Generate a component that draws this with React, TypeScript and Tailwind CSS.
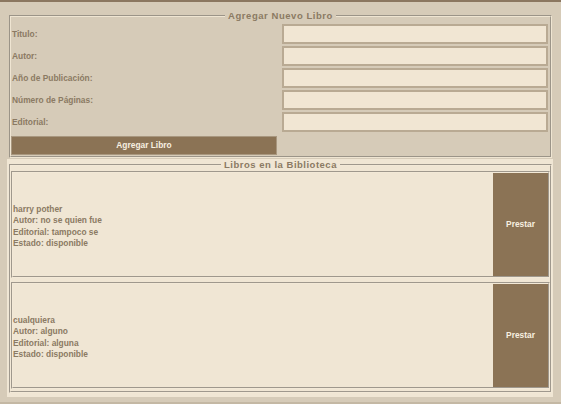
import React from "react";

const books = [
  { t: "harry pother", a: "no se quien fue", e: "tampoco se", s: "disponible" },
  { t: "cualquiera", a: "alguno", e: "alguna", s: "disponible" },
];

const fields = ["Titulo:", "Autor:", "Año de Publicación:", "Número de Páginas:", "Editorial:"];

export default function App() {
  return (
    <div
      className="w-[561px] h-[404px] bg-[#d6cbb8] border-t-2 border-b-2 border-t-[#8b7760] border-b-[#c4b8a4] text-[#8b7a63] font-bold text-[8.4px] overflow-hidden"
      style={{ fontFamily: '"Liberation Sans", Arial, sans-serif' }}
    >
      <div className="pl-[9px] pt-[7px]">
        <fieldset className="w-[543px] border-2 [border-style:groove] border-[#efe5d2] px-0 pb-[1px] m-0">
          <legend className="mx-auto px-[3px] text-[9.5px] tracking-[0.55px] leading-[14px] text-[#8b7a63]">
            Agregar Nuevo Libro
          </legend>
          <div className="grid grid-cols-[266px_266px] gap-x-[5px] gap-y-[2px] mt-[1px]">
            {fields.map((f) => (
              <React.Fragment key={f}>
                <label className="flex items-center pl-[1px] pt-[1px] h-[20px]">{f}</label>
                <input className="h-[20px] w-[266px] border-2 border-[#b9aa93] bg-[#f1e6d3] outline-none" />
              </React.Fragment>
            ))}
            <button className="col-start-1 h-[19px] mt-[2px] bg-[#8b7355] text-[#f7efe0] font-bold text-[8.4px] border border-[#a8977f]">
              Agregar Libro
            </button>
          </div>
        </fieldset>
      </div>
      <div className="ml-[7px] w-[546px] mt-[1px] bg-[#f0e6d4] pl-[2px] pr-[1px] pb-[4px]">
        <fieldset className="border-2 [border-style:groove] border-[#f3e9d7] px-0 pb-[2px] m-0">
          <legend className="mx-auto px-[3px] text-[9.5px] tracking-[0.5px] leading-[12px] text-[#8b7a63]">
            Libros en la Biblioteca
          </legend>
          <div className="flex flex-col gap-[4px] mt-0">
            {books.map((b) => (
              <div key={b.t} className="flex h-[107px] border-2 [border-style:groove] border-[#f3e9d7] bg-[#f0e6d4]">
                <div className="flex-1 flex items-center pt-[4px] leading-[11.5px]">
                  <div>
                    <div>{b.t}</div>
                    <div>Autor: {b.a}</div>
                    <div>Editorial: {b.e}</div>
                    <div>Estado: {b.s}</div>
                  </div>
                </div>
                <button className="w-[55px] bg-[#8b7355] text-[#f7efe0] font-bold text-[8.4px]">Prestar</button>
              </div>
            ))}
          </div>
        </fieldset>
      </div>
    </div>
  );
}
